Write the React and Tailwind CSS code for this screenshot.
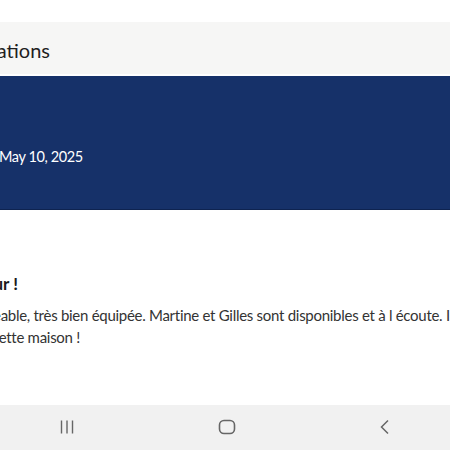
export default function App() {
  return (
    <div className="w-[450px] h-[450px] overflow-hidden bg-white flex flex-col" style={{ fontFamily: 'Lato, "Open Sans", sans-serif' }}>
      <div className="h-[22px] bg-white" />

      {/* page title bar */}
      <div className="h-[52px] bg-[#f6f6f5] flex items-center">
        <div className="w-[50px] shrink-0 flex justify-end mt-[4px]">
          <span className="whitespace-nowrap text-[20px] text-[#1f1f1f]">Évaluations</span>
        </div>
      </div>
      <div className="h-[2px] bg-white" />

      {/* stay header */}
      <div className="h-[134px] bg-[#163169] border-b border-[#0e2350] flex flex-col pt-[70px]">
        <span className="whitespace-nowrap text-[14.5px] tracking-[-0.4px] leading-[22px] text-white ml-[-1px]">May 10, 2025</span>
      </div>

      {/* review */}
      <div className="flex flex-col pt-[63px]">
        <div className="w-[18px] flex justify-end">
          <span className="whitespace-nowrap text-[17px] leading-[22px] font-bold text-[#1a1a1a]">Super séjour !</span>
        </div>
        <div className="flex flex-col mt-[9px] text-[15px] tracking-[-0.28px] text-[#333] leading-[22px]">
          <div className="w-[453px] flex justify-end">
            <span className="whitespace-nowrap">Maison agréable, très bien équipée. Martine et Gilles sont disponibles et à l écoute. Il</span>
          </div>
          <div className="w-[80px] flex justify-end">
            <span className="whitespace-nowrap">Nous recommandons cette maison !</span>
          </div>
        </div>
      </div>

      <div className="flex-1" />

      {/* system navigation bar */}
      <div className="h-[45px] bg-[#f1f1f1] flex items-center justify-between px-[59px]">
        <svg width="16" height="16" viewBox="0 0 16 16" className="mt-[-1px]">
          <path d="M2.5 1.5v13M8 1.5v13M13.5 1.5v13" stroke="#666" strokeWidth="1.4" fill="none" />
        </svg>
        <svg width="18" height="16" viewBox="0 0 18 16" className="mt-[-1px]">
          <rect x="1.5" y="1.5" width="15" height="13" rx="4.5" stroke="#666" strokeWidth="1.6" fill="none" />
        </svg>
        <svg width="12" height="16" viewBox="0 0 12 16" className="mt-[-1px]">
          <path d="M9 1.5L2.5 8l6.5 6.5" stroke="#666" strokeWidth="1.5" fill="none" />
        </svg>
      </div>
    </div>
  )
}
